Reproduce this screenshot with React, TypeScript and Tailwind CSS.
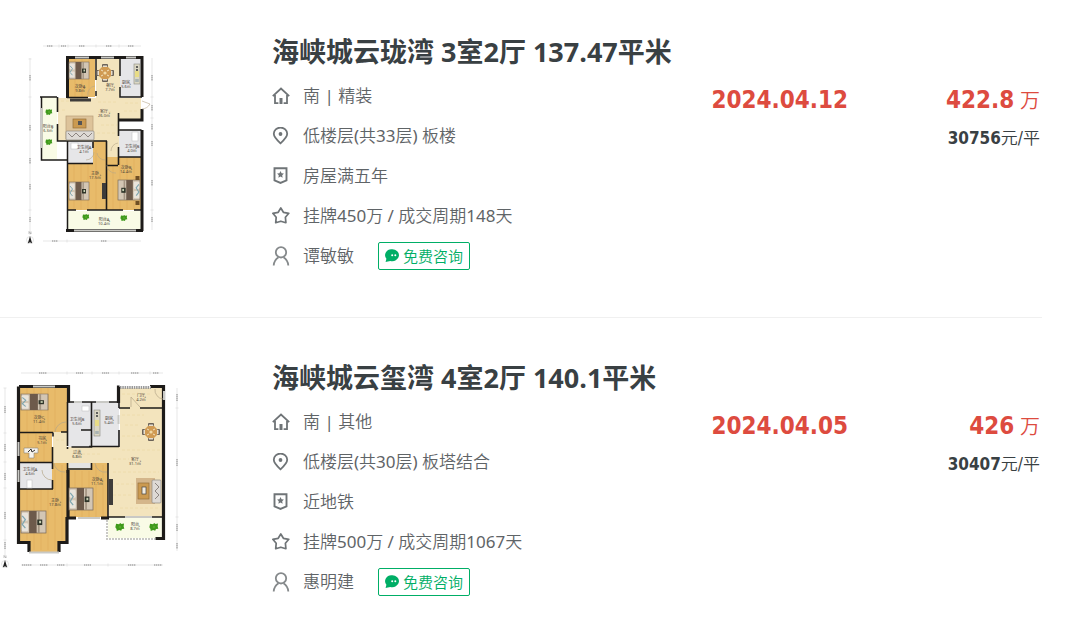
import type { ReactNode } from "react";

type Deal = {
  id: number;
  title: string;
  facing: string;
  floor: string;
  tag: string;
  period: string;
  agent: string;
  date: string;
  total: string;
  unitPrice: string;
  plan: ReactNode;
};

const WOOD = "#e8bb6a";
const GRAIN = "#dcab58";
const TILE = "#f3e4bd";
const BATH = "#e6e6e8";
const GRASS = "#f9fbe6";
const WALL = "#1d1b19";

const Bed = ({
  x,
  y,
  flip = false,
  w = 20,
  h = 18,
}: {
  x: number;
  y: number;
  flip?: boolean;
  w?: number;
  h?: number;
}) => (
  <g
    transform={
      flip
        ? `translate(${x + w} ${y}) scale(${-w / 20} ${h / 18})`
        : `translate(${x} ${y}) scale(${w / 20} ${h / 18})`
    }
  >
    <rect width="20" height="18" fill="#d3c6b4" stroke="#7b6a58" strokeWidth=".6" />
    <rect x=".6" y="1.5" width="5" height="6.5" rx="1" fill="#e9e4dc" />
    <rect x=".6" y="10" width="5" height="6.5" rx="1" fill="#e9e4dc" />
    <path d="M1 4l2.500 3-2.500 4 2.500 3" fill="none" stroke="#7fa6b0" strokeWidth="1" />
    <rect x="6.5" width="6" height="18" fill="#6d5a4b" />
    <rect x="13.500" width="1.400" height="18" fill="#a39482" />
    <rect x="13" y="7" width="4" height="4.5" fill="#2e3328" />
    <rect x="14.5" y="8" width="1.6" height="2" fill="#c7cfb2" />
  </g>
);

const Plant = ({ x, y, s = 1 }: { x: number; y: number; s?: number }) => (
  <g transform={`translate(${x} ${y}) scale(${s})`}>
    <path
      d="M-3-2.500l2.300.3.800-.9 1.100.8 1.900-.3-.3 2 .5 1.900-1.800.3-.6 1.300-1.500-.5-1.900.6-.2-1.500-.9-1.300z"
      fill="#3f9a1c"
    />
    <circle r="1" fill="#57a82c" />
  </g>
);

const DiningSet = ({ x, y }: { x: number; y: number }) => (
  <g transform={`translate(${x} ${y})`}>
    <g fill="#6b6258">
      <rect x="-3" y="-9" width="6" height="3" rx="1" />
      <rect x="-3" y="6" width="6" height="3" rx="1" />
      <rect x="-9" y="-3" width="3" height="6" rx="1" />
      <rect x="6" y="-3" width="3" height="6" rx="1" />
    </g>
    <g fill="#e8dfd0">
      <rect x="-2" y="-7.5" width="4" height="3" />
      <rect x="-2" y="4.5" width="4" height="3" />
      <rect x="-7.5" y="-2" width="3" height="4" />
      <rect x="4.5" y="-2" width="3" height="4" />
    </g>
    <path d="M-3-6h6l3 3v6l-3 3h-6l-3-3v-6z" fill="#d09a52" />
    <circle r="1.6" fill="#f1d9a5" />
    <path d="M-4-3l2 1M4-3l-2 1M-4 3l2-1M4 3l-2-1" stroke="#f3e3c0" />
  </g>
);

const Stove = ({ x, y, h }: { x: number; y: number; h: number }) => (
  <g transform={`translate(${x} ${y})`}>
    <rect width="6" height={h} fill="#dcd8c4" stroke="#8b8a80" strokeWidth=".6" />
    <rect x="1" y={h / 2 - 3} width="4" height="6" fill="#e8dc86" />
    <circle cx="3" cy="3" r="1.1" fill="#444" />
    <circle cx="3" cy="6" r="1.1" fill="#444" />
    <rect x="1.2" y={h - 5} width="3.6" height="3" fill="#aab3b3" />
  </g>
);

const RoomLabel = ({
  x,
  y,
  name,
  area,
}: {
  x: number;
  y: number;
  name: string;
  area: string;
}) => (
  <text
    textAnchor="middle"
    fontSize="4"
    fill="#4a4238"
    fontFamily='"Noto Sans", "Noto Sans CJK SC", sans-serif'
  >
    <tspan x={x} y={y}>
      {name}
    </tspan>
    <tspan x={x} y={y + 4}>
      {area}
    </tspan>
  </text>
);

const Compass = ({ x, y }: { x: number; y: number }) => (
  <g>
    <circle cx={x} cy={y} r="3.5" fill="none" stroke="#ccc" strokeWidth=".5" />
    <path d={`M${x} ${y - 4}l2.2 7.5-2.2-1.2-2.2 1.2z`} fill="#222" />
    <path d={`M${x - 1} ${y - 6}v-2.5l2 2.5v-2.5`} fill="none" stroke="#888" strokeWidth=".5" />
  </g>
);

// dimension lines: light rule, darker dashes where the figures sit
const Rulers = ({ lines, marks }: { lines: string; marks: string }) => (
  <g fill="none">
    <path d={lines} stroke="#dcdcdc" strokeWidth=".7" />
    <path d={marks} stroke="#bdbdbd" strokeWidth="2" strokeDasharray="1.4 .6" />
  </g>
);

const ThreeRoomPlan = () => (
  <svg viewBox="0 32 182 215" className="w-full" role="img" aria-label="户型图">
    <Rulers
      lines="M43 46H141M30 58V235M152 58V230M43 241H141M28.500 59h3M28.500 97h3M28.500 210h3M150.500 97h3M150.500 118h3M150.500 210h3M59 44.500v3M68 44.500v3M96 44.500v3M119 44.500v3M67 239.500v3"
      marks="M47 46h6M61 46h5M79 46h6M106 46h6M128 46h6M30 75v6M30 125v6M30 158v6M30 184v6M30 217v5M152 75v6M152 105v6M152 124v6M152 141v5M152 180v6M152 217v5M52 241h6M101 241h6"
    />
    <rect x="68" y="58" width="27" height="39" fill={WOOD} />
    <path d="M96 58h24v40h21v21h-22v46H93v-24H58V98h38z" fill={TILE} />
    <rect x="120" y="59" width="21" height="38" fill={BATH} />
    <rect x="42" y="97" width="15" height="62" fill={GRASS} />
    <rect x="67" y="142" width="26" height="21" fill={BATH} />
    <path d="M67 163h26v-22h13v69H67z" fill={WOOD} />
    <rect x="106" y="157" width="35" height="53" fill={WOOD} />
    <rect x="119" y="130" width="22" height="27" fill={BATH} />
    <rect x="67" y="211" width="75" height="18" fill={GRASS} />
    <path
      d="M74 164v46M81 164v46M88 164v46M96 150v60M113 166v44M120 158v52M127 158v52M134 158v52M75 59v38M82 59v38M89 59v38"
      stroke={GRAIN}
      strokeWidth=".5"
    />
    <path d="M61 101h30M62 110h5M98 102h20M98 112h14M101 125h16M97 133h20M125 103h14M124 111h13" stroke="#ecd9a8" strokeWidth=".8" strokeDasharray="3 2" />
    <g fill="none" stroke={WALL}>
      <path d="M67.500 98V57.500H142V97M142 109v11h-23M142 130v101M66 230.500h77" strokeWidth="3" />
      <path d="M41.500 97v63H67M40 97h17M67.500 141v90M120 58v18M120 87v10h22M96 58v22M96 91v5" strokeWidth="1.500" />
      <path d="M57.500 97v15M57.500 124v17h36M67 97.500h21M118.500 113v17h23M118.500 130v6M118.500 147v10h23M118.500 157v8M106.500 141v69M93 142v6M67 163.500h26M67 210h9M87 210h36M134 210h8M93 141h14M106 165.500h12" strokeWidth="1.600" />
    </g>
    <path d="M75 57.500h14M101 57.500h13M126 57.500h10M41.500 108v40M74 230.500h62" stroke="#c9c9c5" strokeWidth="2" />
    <path d="M142 101l8 3a10 10 0 0 1-8 5M95 86a8 8 0 0 0-7 10M118 143a8 8 0 0 0-7 8M107 165a8 8 0 0 0 9 8M94 152a8 8 0 0 1-8 8M97 153a8 8 0 0 0 8 7" fill="none" stroke="#b5a688" strokeWidth=".6" />
    <rect x="70" y="98.500" width="21" height="3" fill="#3e3c3a" />
    <rect x="102" y="183" width="4" height="16" fill="#3e3c3a" />
    <Bed x={69} y={62} h={17} />
    <Bed x={69} y={182} />
    <Bed x={118} y={180} w={22} h={20} flip />
    <g fill="#6f4f24">
      <rect x="135.500" y="176" width="4" height="4" />
      <rect x="135.500" y="201" width="4" height="4" />
    </g>
    <DiningSet x={105} y={73} />
    <Stove x={134} y={64} h={20} />
    <rect x="66" y="116" width="27" height="23" fill="#ddc39a" stroke="#b79f7a" strokeWidth=".7" />
    <rect x="73" y="119" width="13" height="9" fill="#cb9a50" stroke="#94703a" strokeWidth=".7" />
    <rect x="78" y="121" width="4" height="4" fill="#555" />
    <rect x="66" y="131" width="28" height="9" rx="1" fill="#dedad5" stroke="#8f8982" strokeWidth=".7" />
    <path d="M68 133l4 4 4-4 4 4 4-4 4 4 4-4" fill="none" stroke="#8d8580" strokeWidth="1" />
    <rect x="71" y="143" width="7" height="6" fill="#fff" stroke="#bbb" strokeWidth=".5" />
    <rect x="132" y="132" width="6" height="9" fill="#fff" stroke="#bbb" strokeWidth=".5" />
    <Plant x={49} y={112} />
    <Plant x={49} y={142} />
    <Plant x={86} y={217} />
    <Plant x={124} y={218} />
    <RoomLabel x={80} y={88} name="次卧A" area="9.8㎡" />
    <RoomLabel x={110} y={87} name="餐厅" area="7.7㎡" />
    <RoomLabel x={126} y={84} name="厨房" area="5.6㎡" />
    <RoomLabel x={104} y={113} name="客厅" area="26.0㎡" />
    <RoomLabel x={48} y={128} name="阳台B" area="6.3㎡" />
    <RoomLabel x={84} y={149} name="卫生间A" area="4.1㎡" />
    <RoomLabel x={132} y={148} name="卫生间B" area="4.0㎡" />
    <RoomLabel x={95} y={175} name="主卧" area="17.5㎡" />
    <RoomLabel x={126} y={169} name="次卧B" area="14.4㎡" />
    <RoomLabel x={104} y={221} name="阳台A" area="10.4㎡" />
    <Compass x={30} y={240} />
  </svg>
);

const FourRoomPlan = () => (
  <svg viewBox="0 358 182 215" className="w-full" role="img" aria-label="户型图">
    <Rulers
      lines="M21 373H163M5 388V556M177 388V551M21 565H163M3.500 388h3M3.500 433h3M3.500 462h3M3.500 488h3M3.500 540h3M175.500 408h3M175.500 517h3M67 371.500v3M92 371.500v3M119 371.500v3M150 371.500v3M67 563.500v3M108 563.500v3"
      marks="M39 373h8M76 373h7M102 373h7M131 373h8M153 373h6M5 406v7M5 444v7M5 473v7M5 512v7M5 542v7M177 394v7M177 459v7M177 524v7M177 543v6M22 565h10M40 565h8M57 565h8M84 565h7M128 565h8M154 565h8"
    />
    <rect x="20" y="387" width="47" height="45" fill={WOOD} />
    <rect x="20" y="433" width="32" height="29" fill={WOOD} />
    <path d="M120 388h43v129h-54v-47H53v-38h14v15h53z" fill={TILE} />
    <rect x="68" y="402" width="24" height="45" fill={BATH} />
    <rect x="92" y="402" width="27" height="45" fill={BATH} />
    <rect x="20" y="463" width="32" height="26" fill={BATH} />
    <path d="M20 489h32v-26h15v78h-9v11H30v-11H20z" fill={WOOD} />
    <path d="M68 470h24v-7h16v54H68z" fill={WOOD} />
    <rect x="69" y="463" width="22" height="5" fill="#e4e4e2" />
    <rect x="108" y="518" width="55" height="20" fill={GRASS} />
    <path
      d="M27 388v44M34 388v44M41 388v44M48 388v44M55 388v44M27 490v50M34 490v60M41 490v60M48 490v60M55 470v80M62 465v75M75 471v46M82 471v46M89 471v46M96 465v52M103 465v52M28 434v28M36 434v28M44 434v28"
      stroke={GRAIN}
      strokeWidth=".5"
    />
    <path d="M122 394h30M122 415h22M125 425h15M122 436h20M122 450h38M113 459h16M113 472h46M116 484h18M113 495h20M120 508h40M56 440h9M72 454h30" stroke="#ecd9a8" strokeWidth=".8" strokeDasharray="3 2" />
    <g fill="none" stroke={WALL}>
      <path d="M18.500 386.500V542.500H29V552M19 386.500h49.500v16M118.500 403V387h1M150 386.500h13.500V538.500h-8M68 470v48M67 517v25.500h-8V552M68 518h8M101 518h8" strokeWidth="3.200" />
      <path d="M68 402h52M20 432.500h33M53 432.500v4M61 432h7M67.500 402v44M91.500 402v45h-20M81 430h10M119 446.500H89M119 403v5M119 408h11M140 408h23M119 430v17M52.500 447v22M52.500 480v9M20 462.500h33M20 489h33M67.500 447v2M67.500 463v10M68 469h24M91.500 463v7M108 463v55M108 517h17M152 517h11" strokeWidth="1.600" />
    </g>
    <path d="M120 387.500h31" stroke="#999" strokeWidth="3" strokeDasharray="1.500 .8" />
    <path d="M107 520v19h48" fill="none" stroke="#c9c9c5" strokeWidth="2" strokeDasharray="2 1" />
    <path d="M33 386.500h22M74 402h8M96 402h13M18.500 442v14M18.500 470v12M78 518h22M29 552.500h30M164 391v9M118.500 415v9M125 517h27" fill="none" stroke="#c9c9c5" strokeWidth="2" />
    <path d="M66 422a11 11 0 0 0-11 10M131 407v-10l9 10M155 389a9 9 0 0 0 8 10M42 470a10 10 0 0 0 10 10M54 463a10 10 0 0 0 11 9M95 463a10 10 0 0 0 12 9" fill="none" stroke="#b5a688" strokeWidth=".7" />
    <Bed x={21} y={394} w={27} h={16} />
    <Bed x={21} y={511} w={25} h={22} />
    <Bed x={69} y={488} w={24} h={22} />
    <DiningSet x={151} y={432} />
    <Stove x={94} y={410} h={26} />
    <rect x="109" y="479" width="4" height="26" fill="#3e3c3a" />
    <rect x="136" y="478" width="19" height="26" fill="#d4b68b" />
    <rect x="138" y="483" width="11" height="16" fill="#cb9a50" stroke="#94703a" strokeWidth=".7" />
    <rect x="142" y="487" width="4" height="7" fill="#f2ede0" stroke="#444" strokeWidth=".7" />
    <rect x="152" y="480" width="9" height="23" rx="1" fill="#dedad5" stroke="#8f8982" strokeWidth=".7" />
    <path d="M155 483l4 4-4 4 4 4-4 4" fill="none" stroke="#8d8580" />
    <path d="M24 448h14v5h-4v5h-5v-5h-5z" fill="#f6f3ec" stroke="#8b8375" strokeWidth=".6" />
    <path d="M28 452l3-3 1 3 3-2" fill="none" stroke="#333" />
    <rect x="82" y="406" width="7" height="5" fill="#fff" stroke="#bbb" strokeWidth=".5" />
    <rect x="27" y="480" width="5" height="8" fill="#fff" stroke="#bbb" strokeWidth=".5" />
    <Plant x={120} y={527} s={1.3} />
    <Plant x={154} y={527} s={1.3} />
    <RoomLabel x={39} y={419} name="次卧C" area="11.4㎡" />
    <RoomLabel x={77} y={421} name="卫生间B" area="5.6㎡" />
    <RoomLabel x={109} y={420} name="厨房" area="5.4㎡" />
    <RoomLabel x={141} y={397} name="门厅" area="4.2㎡" />
    <RoomLabel x={42} y={440} name="书房" area="5.1㎡" />
    <RoomLabel x={77} y={454} name="过道" area="6.8㎡" />
    <RoomLabel x={135} y={461} name="客厅" area="31.1㎡" />
    <RoomLabel x={30} y={471} name="卫生间A" area="4.6㎡" />
    <RoomLabel x={55} y={502} name="主卧" area="17.8㎡" />
    <RoomLabel x={97} y={481} name="次卧A" area="11.1㎡" />
    <RoomLabel x={135} y={526} name="阳台" area="8.7㎡" />
    <Compass x={5} y={564} />
  </svg>
);

const HouseIcon = () => (
  <svg viewBox="0 0 18 18" className="size-[18px]" fill="none" stroke="#6f7477" strokeWidth="1.800">
    <path d="M.8 9.200L9 1.500l8.200 7.700M3 8v8.200h3.400M15 8v8.200h-3.400" />
    <path d="M9 11v6" strokeWidth="3" />
  </svg>
);

const PinIcon = () => (
  <svg viewBox="0 0 18 18" className="size-[18px]" fill="none" stroke="#6f7477" strokeWidth="1.800">
    <path d="M8.500 16.300C4.500 12.700 1.800 10.100 1.800 6.800a6.700 6.200 0 0 1 13.400 0c0 3.300-2.700 5.900-6.700 9.500z" />
    <circle cx="8.500" cy="7" r="1.900" fill="#6f7477" stroke="none" />
  </svg>
);

const BadgeIcon = () => (
  <svg viewBox="0 0 18 18" className="size-[18px]" fill="none" stroke="#6f7477" strokeWidth="1.900">
    <path d="M2.500 1.300h12v12l-6 2.600-6-2.600z" />
    <path d="M8.500 4.100l1.100 2.200 2.300.3-1.700 1.700.4 2.400-2.100-1.200-2.100 1.200.4-2.400-1.700-1.700 2.300-.3z" fill="#6f7477" stroke="none" />
  </svg>
);

const StarIcon = () => (
  <svg viewBox="0 0 18 18" className="size-[18px]" fill="none" stroke="#6f7477" strokeWidth="1.700" strokeLinejoin="round">
    <path d="M8.800 1l2.600 4.300 5.400 1-3.400 4 .5 5.400-5.100-1.500-5.100 1.500.5-5.400-3.400-4 5.400-1z" />
  </svg>
);

const PersonIcon = () => (
  <svg viewBox="0 0 18 20" className="h-5 w-[18px]" fill="none" stroke="#85898b" strokeWidth="1.800">
    <circle cx="9" cy="6.300" r="5.200" />
    <path d="M1.700 19.500c.2-3.600 1.600-6 4.800-8.200M16.300 19.500c-.2-3.600-1.600-6-4.800-8.200" />
  </svg>
);

const ChatIcon = () => (
  <svg viewBox="0 0 14 14" className="size-3.5">
    <path d="M7 .2a6.700 6 0 1 1-1.800 11.700L.6 13l.8-3.200A6.200 6 0 0 1 7 .2z" fill="#00ae66" />
    <circle cx="7.200" cy="6.200" r="1" fill="#fff" />
    <circle cx="10.300" cy="6.200" r="1" fill="#fff" />
  </svg>
);

const InfoRow = ({ icon, children }: { icon: ReactNode; children: ReactNode }) => (
  <div className="flex h-10 items-center gap-[13px]">
    {icon}
    {children}
  </div>
);

const deals: Deal[] = [
  {
    id: 1,
    title: "海峡城云珑湾 3室2厅 137.47平米",
    facing: "南 | 精装",
    floor: "低楼层(共33层) 板楼",
    tag: "房屋满五年",
    period: "挂牌450万 / 成交周期148天",
    agent: "谭敏敏",
    date: "2024.04.12",
    total: "422.8",
    unitPrice: "30756",
    plan: <ThreeRoomPlan />,
  },
  {
    id: 2,
    title: "海峡城云玺湾 4室2厅 140.1平米",
    facing: "南 | 其他",
    floor: "低楼层(共30层) 板塔结合",
    tag: "近地铁",
    period: "挂牌500万 / 成交周期1067天",
    agent: "惠明建",
    date: "2024.04.05",
    total: "426",
    unitPrice: "30407",
    plan: <FourRoomPlan />,
  },
];

const DealItem = ({ deal }: { deal: Deal }) => (
  <li className="flex border-b border-[#f0f0f0] pt-10 pb-[41px] first:pt-8 last:border-b-0">
    <a href="#" className="mr-[90px] w-[182px] shrink-0">
      {deal.plan}
    </a>

    <div className="min-w-0 flex-1">
      <h2 className="mb-1 text-[27px] leading-10 font-bold whitespace-nowrap text-[#394043]">
        {deal.title}
      </h2>
      <div className="flex">
        <div className="min-w-0 flex-1 font-['Noto_Sans','Noto_Sans_CJK_SC_DemiLight','Noto_Sans_CJK_SC',sans-serif] text-[17px] whitespace-nowrap text-[#5f6467]">
          <InfoRow icon={<HouseIcon />}>{deal.facing}</InfoRow>
          <InfoRow icon={<PinIcon />}>{deal.floor}</InfoRow>
          <InfoRow icon={<BadgeIcon />}>{deal.tag}</InfoRow>
          <InfoRow icon={<StarIcon />}>{deal.period}</InfoRow>
          <InfoRow icon={<PersonIcon />}>
            <span className="mr-[11px]">{deal.agent}</span>
            <button
              type="button"
              className="flex h-7 cursor-pointer items-center gap-1 rounded-xs border border-[#00ae66] px-1.5 text-[15px] text-[#00ae66]"
            >
              <ChatIcon />
              免费咨询
            </button>
          </InfoRow>
        </div>

        <div className="pt-1 font-['DejaVu_Sans_Condensed','Noto_Sans_CJK_SC',sans-serif] text-2xl leading-10 font-bold text-[#dd4b3f]">
          {deal.date}
        </div>

        <div className="w-[194px] shrink-0 pt-1 pr-0.5 text-right font-['DejaVu_Sans_Condensed','Noto_Sans_CJK_SC',sans-serif]">
          <div className="text-2xl leading-10 text-[#dd4b3f]">
            <span className="font-bold">{deal.total}</span>
            <span className="text-xl font-[350]"> 万</span>
          </div>
          <div className="text-[17px] leading-9 text-[#394043]">
            <span className="font-bold">{deal.unitPrice}</span>
            <span className="font-[350]">元/平</span>
          </div>
        </div>
      </div>
    </div>
  </li>
);

const App = () => (
  <main className="min-h-screen bg-white pr-[38px] font-['Open_Sans','Noto_Sans_CJK_SC',sans-serif]">
    <ul>
      {deals.map((deal) => (
        <DealItem key={deal.id} deal={deal} />
      ))}
    </ul>
  </main>
);

export default App;
